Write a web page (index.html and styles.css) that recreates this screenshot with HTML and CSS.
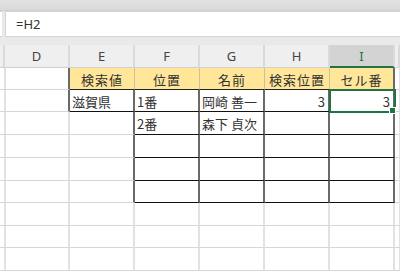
FILE: index.html
```html
<!DOCTYPE html>
<html>
<head>
  <title>検索</title>
  <link rel="stylesheet" href="styles.css">
</head>
<body>
  <div class="top-band"></div>

  <div class="formula-row">
    <div class="name-box"></div>
    <div class="formula-box">=H2</div>
  </div>

  <div class="gap"></div>

  <div class="sheet">
    <!-- column headers -->
    <div class="colhead"></div>
    <div class="colhead">D</div>
    <div class="colhead">E</div>
    <div class="colhead">F</div>
    <div class="colhead">G</div>
    <div class="colhead">H</div>
    <div class="colhead selected">I</div>
    <div class="colhead"></div>

    <!-- row 1 -->
    <div class="cell"></div>
    <div class="cell edge"></div>
    <div class="cell head">検索値</div>
    <div class="cell head">位置</div>
    <div class="cell head">名前</div>
    <div class="cell head">検索位置</div>
    <div class="cell head last">セル番</div>
    <div class="cell"></div>

    <!-- row 2 -->
    <div class="cell"></div>
    <div class="cell edge"></div>
    <div class="cell box">滋賀県</div>
    <div class="cell box">1番</div>
    <div class="cell box">岡崎 善一</div>
    <div class="cell box num">3</div>
    <div class="cell box num active">3</div>
    <div class="cell"></div>

    <!-- row 3 -->
    <div class="cell"></div>
    <div class="cell"></div>
    <div class="cell edge"></div>
    <div class="cell box">2番</div>
    <div class="cell box">森下 貞次</div>
    <div class="cell box"></div>
    <div class="cell box"></div>
    <div class="cell"></div>

    <!-- rows 4-6 -->
    <div class="cell"></div>
    <div class="cell"></div>
    <div class="cell edge"></div>
    <div class="cell box"></div>
    <div class="cell box"></div>
    <div class="cell box"></div>
    <div class="cell box"></div>
    <div class="cell"></div>

    <div class="cell"></div>
    <div class="cell"></div>
    <div class="cell edge"></div>
    <div class="cell box"></div>
    <div class="cell box"></div>
    <div class="cell box"></div>
    <div class="cell box"></div>
    <div class="cell"></div>

    <div class="cell"></div>
    <div class="cell"></div>
    <div class="cell edge"></div>
    <div class="cell box"></div>
    <div class="cell box"></div>
    <div class="cell box"></div>
    <div class="cell box"></div>
    <div class="cell"></div>

    <!-- rows 7-9 -->
    <div class="cell"></div>
    <div class="cell"></div>
    <div class="cell"></div>
    <div class="cell"></div>
    <div class="cell"></div>
    <div class="cell"></div>
    <div class="cell"></div>
    <div class="cell"></div>

    <div class="cell"></div>
    <div class="cell"></div>
    <div class="cell"></div>
    <div class="cell"></div>
    <div class="cell"></div>
    <div class="cell"></div>
    <div class="cell"></div>
    <div class="cell"></div>

    <div class="cell"></div>
    <div class="cell"></div>
    <div class="cell"></div>
    <div class="cell"></div>
    <div class="cell"></div>
    <div class="cell"></div>
    <div class="cell"></div>
    <div class="cell"></div>
  </div>
</body>
</html>
```

FILE: styles.css
```css
body {
  margin: 0;
  padding: 0;
  width: 400px;
  height: 271px;
  overflow: hidden;
  background-color: #e9e9e9;
  font-family: "Noto Sans CJK JP", "Noto Sans", sans-serif;
}

.top-band {
  height: 10px;
  background: linear-gradient(#e2e2e2, #d9d9d9);
  border-bottom: 1px solid #cfcfcf;
}

.formula-row {
  display: flex;
  gap: 3px;
  height: 26px;
  background-color: #e9e9e9;
}

.name-box {
  width: 2px;
  background-color: white;
  border-top: 1px solid #d4d4d4;
  border-bottom: 1px solid #d4d4d4;
}

.formula-box {
  flex: 1;
  background-color: white;
  border-top: 1px solid #d4d4d4;
  border-bottom: 1px solid #d4d4d4;
  border-left: 1px solid #d4d4d4;
  padding-left: 10px;
  font-family: "Noto Sans", "Liberation Sans", sans-serif;
  font-size: 13px;
  color: #333;
  line-height: 24px;
}

.gap {
  height: 8px;
}

.sheet {
  display: grid;
  grid-template-columns: 5px repeat(6, 65px) 5px;
  grid-template-rows: 23px 22px 22px 23px 23px 23px 22px 23px 22px 23px;
  background-color: white;
}

.colhead {
  box-sizing: border-box;
  background-color: #efefef;
  border-right: 2px solid #dadada;
  border-bottom: 1px solid #d0d0d0;
  display: flex;
  align-items: center;
  justify-content: center;
  font-family: "Noto Sans", "Liberation Sans", sans-serif;
  font-size: 13px;
  color: #444;
}

.colhead.selected {
  background-color: #d3d3d3;
  border-bottom: 2px solid #217346;
  color: #217346;
}

.cell {
  box-sizing: border-box;
  border-right: 2px solid #e2e2e2;
  border-bottom: 1px solid #d6d6d6;
  display: flex;
  align-items: center;
  padding: 1px 2px 0 2px;
  font-size: 13px;
  color: #333;
  white-space: nowrap;
  overflow: hidden;
}

.cell.edge {
  border-right: 2px solid #6a6a6a;
}

.cell.head {
  background-color: #ffe699;
  border-right: 1px solid #c8c0a0;
  border-bottom: 1px solid #222;
  justify-content: center;
  letter-spacing: 1px;
}

.cell.head.last {
  border-right: 2px solid #6a6a6a;
}

.cell.box {
  border-right: 2px solid #6a6a6a;
  border-bottom: 1px solid #111;
}

.cell.num {
  justify-content: flex-end;
  padding-right: 3px;
}

.cell.active {
  position: relative;
  overflow: visible;
  outline: 2px solid #217346;
  outline-offset: -1px;
}

.cell.active::after {
  content: "";
  position: absolute;
  right: -3px;
  bottom: -3px;
  width: 5px;
  height: 5px;
  background-color: #217346;
  border: 1px solid white;
}
```
